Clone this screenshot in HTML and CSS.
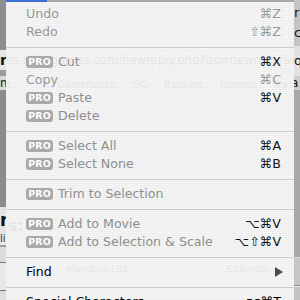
FILE: index.html
```html
<!DOCTYPE html>
<html>
<head>
<meta charset="utf-8">
<link rel="stylesheet" href="styles.css">
</head>
<body>
<div class="page">
  <div class="lcol">
    <div class="l1"></div>
    <div class="l2">r</div>
    <div class="l3"></div>
    <div class="l4">m</div>
    <div class="l5"></div>
    <div class="l6">r</div>
    <div class="l7">li</div>
    <div class="l8"></div>
    <div class="l9"></div>
    <div class="l10"></div>
    <div class="l11"></div>
    <div class="l12"></div>
    <div class="l13"></div>
  </div>
  <div class="mid">
    <div class="url">ns.iplaygames.com/newreply.php?do=newreply&amp;noquote=1</div>
    <div class="bookmarks">
      <span class="bm-first">s</span>
      <span>Gamehouse</span>
      <span>JSG</span>
      <span>Banking</span>
      <span>Torrents</span>
      <span>Tra</span>
    </div>
    <div class="heading">s:</div>
    <div class="navlinks">
      <span>Members List</span>
      <span>Calendar</span>
    </div>
  </div>
  <div class="rcol">
    <div class="r1"><span>r</span><span>c</span></div>
    <div class="r2">q</div>
    <div class="r3">a</div>
    <div class="r4"></div>
    <div class="r5"></div>
    <div class="r6"></div>
    <div class="r7"></div>
    <div class="r8"></div>
    <div class="r9"></div>
  </div>
</div>

<div class="menu">
  <div class="menu-top"><div class="title-hl"></div></div>
  <ul class="items">
    <li class="item disabled"><span class="label">Undo</span><span class="key">⌘Z</span></li>
    <li class="item disabled"><span class="label">Redo</span><span class="key">⇧⌘Z</span></li>
    <li class="sep"></li>
    <li class="item pro"><span class="badge">PRO</span><span class="label">Cut</span><span class="key">⌘X</span></li>
    <li class="item disabled"><span class="label">Copy</span><span class="key">⌘C</span></li>
    <li class="item pro"><span class="badge">PRO</span><span class="label">Paste</span><span class="key">⌘V</span></li>
    <li class="item pro"><span class="badge">PRO</span><span class="label">Delete</span></li>
    <li class="sep"></li>
    <li class="item pro"><span class="badge">PRO</span><span class="label">Select All</span><span class="key">⌘A</span></li>
    <li class="item pro"><span class="badge">PRO</span><span class="label">Select None</span><span class="key">⌘B</span></li>
    <li class="sep"></li>
    <li class="item pro"><span class="badge">PRO</span><span class="label">Trim to Selection</span></li>
    <li class="sep"></li>
    <li class="item pro"><span class="badge">PRO</span><span class="label">Add to Movie</span><span class="key">⌥⌘V</span></li>
    <li class="item pro"><span class="badge">PRO</span><span class="label">Add to Selection &amp; Scale</span><span class="key">⌥⇧⌘V</span></li>
    <li class="sep"></li>
    <li class="item"><span class="label">Find</span><span class="arrow"></span></li>
    <li class="sep"></li>
    <li class="item"><span class="label">Special Characters…</span><span class="key">⌥⌘T</span></li>
  </ul>
</div>
</body>
</html>
```

FILE: styles.css
```css
* { box-sizing: border-box; margin: 0; padding: 0; }
html, body { width: 300px; height: 300px; overflow: hidden; }
body {
  position: relative;
  background: #fff;
  font-family: "DejaVu Sans", "Liberation Sans", sans-serif;
}

/* ---------- page behind the menu ---------- */
.page { display: flex; width: 300px; height: 300px; }
.lcol, .rcol {
  width: 6px;
  display: flex;
  flex-direction: column;
  overflow: hidden;
  white-space: nowrap;
  color: #111;
}
.mid { width: 288px; background: #fff; color: #222; white-space: nowrap; overflow: hidden; }

.l1 { height: 50px; background: #8e8e8e; }
.l2 { height: 20px; background: #e6e6e6; font: bold 14px/20px "DejaVu Sans", sans-serif; }
.l3 { height: 6px; background: #9c9c9c; }
.l4 { height: 14px; background: #d9d9d9; font: 12px/14px "DejaVu Sans", sans-serif; }
.l5 { height: 117px; background: #8b8b8b; }
.l6 { height: 26px; background: #e3e3e3; font: bold 17px/26px "DejaVu Sans", sans-serif; }
.l7 { height: 12px; background: #e8e8e8; font: 10px/12px "DejaVu Sans", sans-serif; color: #333; }
.l8 { height: 2px; background: #a0a0a0; }
.l9 { height: 15px; background: #dcdcdc; }
.l10 { height: 1px; background: #777; }
.l11 { height: 27px; background: #e8e8e8; }
.l12 { height: 1px; background: #777; }
.l13 { flex: 1; background: #dedede; }

.r1 { height: 46px; background: #c4c4c4; display: flex; flex-direction: column; padding-top: 3px;
      font: 13px/20px "DejaVu Sans", sans-serif; }
.r2 { height: 30px; background: #e2e2e2; font: 13px/30px "DejaVu Sans", sans-serif; }
.r3 { height: 14px; background: #cfcfcf; font: 12px/14px "DejaVu Sans", sans-serif; margin-left: -3px; }
.r4 { height: 167px; background: #a8a8a8; }
.r5 { height: 1px; background: #d8d8d8; }
.r6 { height: 27px; background: #c6c6c6; }
.r7 { height: 1px; background: #8a8a8a; }
.r8 { height: 1px; background: #eee; }
.r9 { flex: 1; background: #c2c2c2; }

.url { margin-top: 53px; height: 14px; font-size: 11.6px; line-height: 14px; }
.bookmarks {
  margin-top: 11px;
  height: 13px;
  display: flex;
  gap: 16px;
  font-size: 9.6px;
  line-height: 13px;
}
.bm-first { margin-right: 31px; }
.heading { margin-top: 126px; height: 18px; font: bold 16px/18px "DejaVu Sans", sans-serif; padding-left: 2px; }
.navlinks {
  margin-top: 27px;
  display: flex;
  gap: 100px;
  padding-left: 61px;
  font-size: 9px;
  line-height: 14px;
}

/* ---------- menu overlay ---------- */
.menu {
  position: absolute;
  left: 6px;
  top: 0;
  width: 288px;
  height: 300px;
  background: repeating-linear-gradient(to bottom,
    rgba(244, 244, 244, 0.94) 0 1px,
    rgba(237, 237, 237, 0.94) 1px 2px);
  font-size: 12.6px;
  color: #000;
}
.menu-top { height: 2px; background: #a8a8a8; display: flex; }
.title-hl { width: 41px; height: 2px; background: #3c6fd4; }

.items { list-style: none; padding-top: 3px; }
.item {
  height: 18px;
  line-height: 18px;
  display: flex;
  align-items: center;
  padding: 0 13px 0 20px;
}
.label { flex: 1; }
.key { text-align: right; }
.disabled .label, .disabled .key { color: #979797; }
.pro .label { color: #8e8e8e; }
.pro .key { color: #111; }

.badge {
  width: 27px;
  height: 12px;
  margin-right: 5px;
  border-radius: 3px;
  background: #aaaaaa;
  color: #fff;
  font: bold 9.4px/12px "DejaVu Sans", sans-serif;
  letter-spacing: 0.2px;
  text-align: center;
}

.sep { height: 12px; display: flex; align-items: center; }
.sep::before { content: ""; flex: 1; height: 1px; background: #cbcbcb; }

.arrow {
  width: 0;
  height: 0;
  margin-right: -2px;
  border-left: 8px solid #4a4a4a;
  border-top: 5px solid transparent;
  border-bottom: 5px solid transparent;
}
```
